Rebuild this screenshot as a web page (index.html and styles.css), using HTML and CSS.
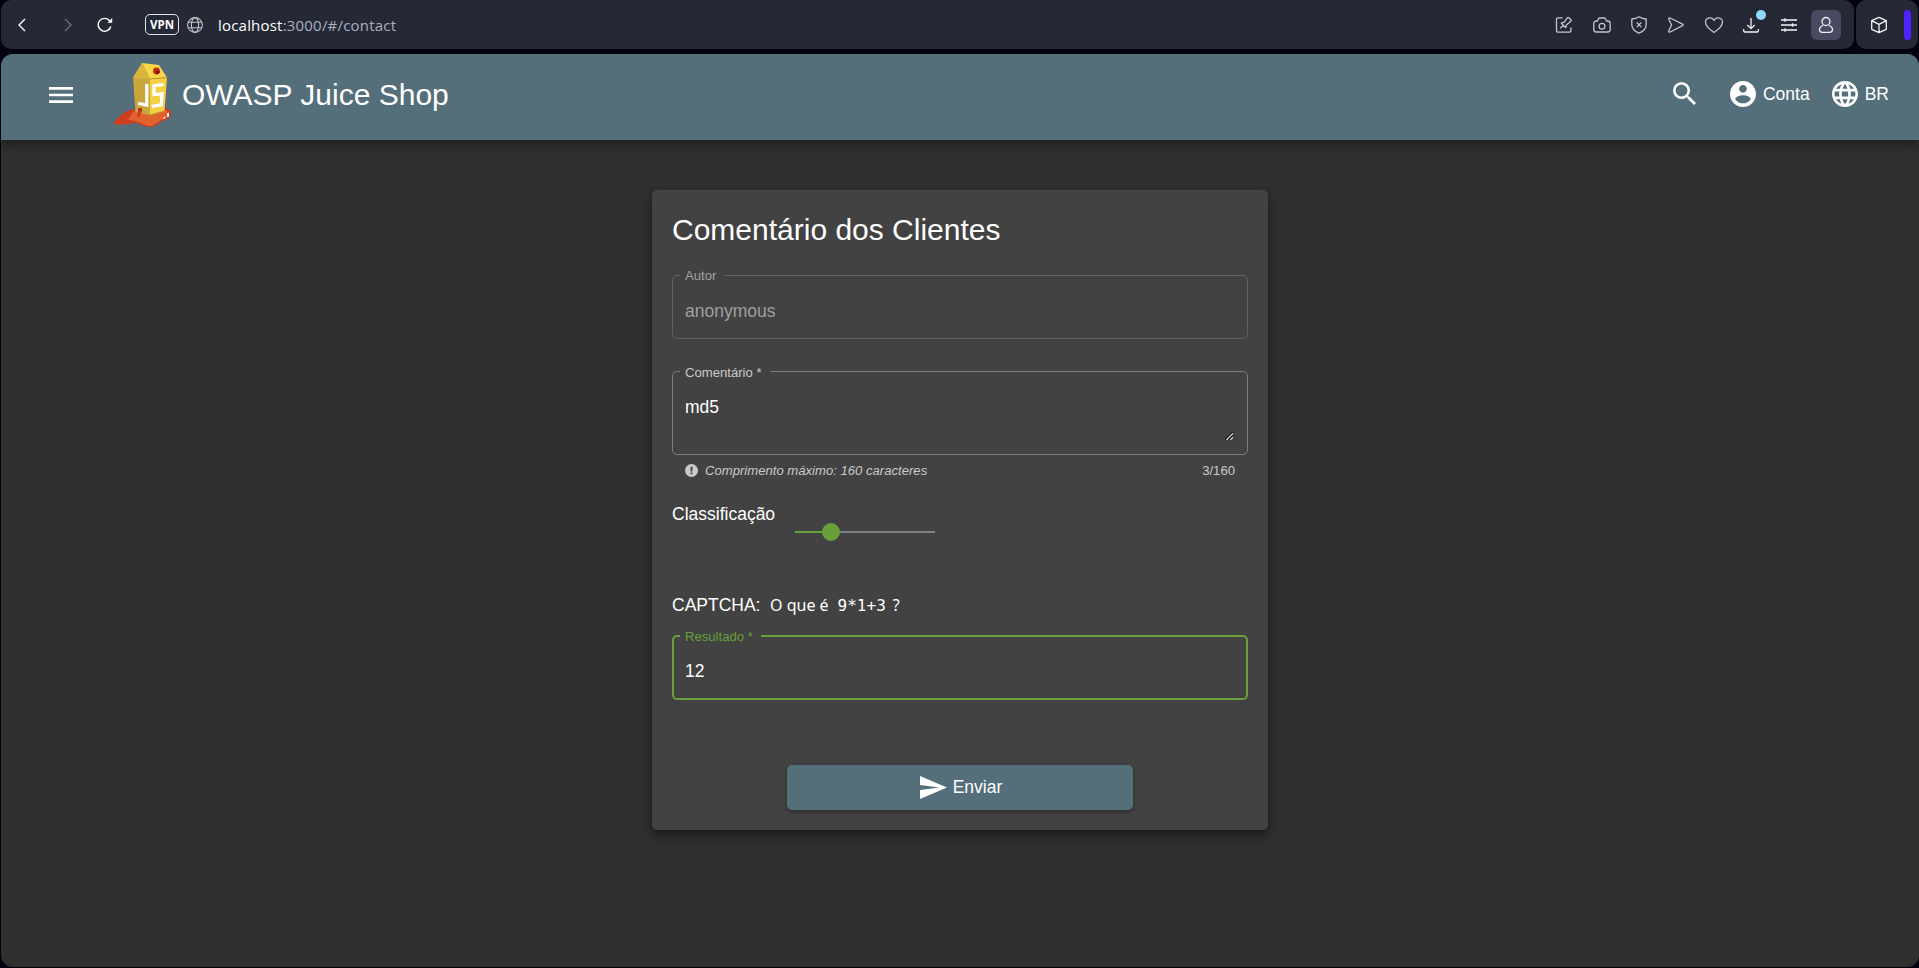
FILE: index.html
```html
<!DOCTYPE html>
<html lang="pt-BR">
<head>
<meta charset="utf-8">
<title>OWASP Juice Shop</title>
<link rel="stylesheet" href="styles.css">
</head>
<body>
<div class="browser">
  <div class="chrome">
    <div class="toolbar">
      <div class="nav-buttons">
        <svg class="back" width="8" height="14" viewBox="0 0 8 14"><path d="M7 1 1 7l6 6"/></svg>
        <svg class="forward" width="8" height="14" viewBox="0 0 8 14"><path d="M1 1l6 6-6 6"/></svg>
        <svg class="reload" width="16" height="16" viewBox="0 0 16 16"><path d="M13.800 9.500A6.400 6.400 0 1 1 12.400 3.500L14 5"/><path class="solid" d="M15.200 1v4.800H10.400z"/></svg>
      </div>
      <div class="vpn">VPN</div>
      <svg class="site" width="16" height="16" viewBox="0 0 16 16"><circle cx="8" cy="8" r="7.4"/><ellipse cx="8" cy="8" rx="3.6" ry="7.4"/><path d="M1.400 5.200h13.200M1.400 10.800h13.200"/></svg>
      <div class="url"><span class="host">localhost</span>:3000/#/contact</div>
      <div class="tools">
        <svg width="18" height="18" viewBox="0 0 18 18"><path d="M7.500 1.800H3a1.500 1.500 0 0 0-1.500 1.500v11.400A1.500 1.500 0 0 0 3 16.200h11.400a1.500 1.500 0 0 0 1.500-1.500V11.500"/><path d="M5.200 12.300 8.400 9.200M6.300 7.200l4.400 4.400.9-2.900 4.200-3.400c.6-.5.600-1 .1-1.500L13.800 1.700c-.5-.5-1-.5-1.500.1L9.200 6.100z"/></svg>
        <svg width="18" height="18" viewBox="0 0 18 18"><path d="M.8 7.500a2.500 2.500 0 0 1 2.500-2.500h1.200l1-2.200c.3-.6.700-.8 1.300-.8h4.400c.6 0 1 .2 1.300.8l1 2.200h1.200a2.500 2.500 0 0 1 2.500 2.500v6a2.500 2.500 0 0 1-2.500 2.500H3.300a2.500 2.500 0 0 1-2.500-2.500z"/><circle cx="9" cy="10.200" r="2.900"/></svg>
        <svg width="18" height="18" viewBox="0 0 18 18"><path d="M9 .8c2.300 1.500 4.700 2.200 7.200 2.200v5.500c0 4-3 7-7.200 8.700-4.200-1.700-7.200-4.700-7.200-8.700V3C4.300 3 6.700 2.300 9 .8z"/><path d="M6.700 6.500l4.600 4.600M11.300 6.500l-4.600 4.600"/></svg>
        <svg width="18" height="18" viewBox="0 0 18 18"><path d="M3.200 2 15.500 8.200c.8.400.8 1 0 1.500L3.200 16c-1 .5-1.800-.2-1.400-1.200L4.600 9 1.800 3.200C1.400 2.200 2.200 1.500 3.200 2z"/></svg>
        <svg width="18" height="18" viewBox="1 0 18 18"><path d="M10 16.500C4 12.500 1.500 9.500 1.500 6.300c0-5 6.500-6.100 8.500-1.800 2-4.300 8.500-3.200 8.500 1.800 0 3.200-2.500 6.200-8.500 10.200z"/></svg>
        <span class="download">
          <svg class="bright" width="18" height="18" viewBox="0 0 18 18"><path d="M9 2v10.500M5.300 9l3.700 3.600L12.700 9M1.700 13v1.700c0 .8.500 1.300 1.300 1.300h12c.8 0 1.300-.5 1.300-1.300V13"/></svg>
          <span class="dot"></span>
        </span>
        <svg class="bright" width="18" height="18" viewBox="0 0 18 18"><path d="M1 4h16M1 9h16M1 14h16M5 2.200v3.600M12.500 7.200v3.600M5 12.200v3.600"/></svg>
        <span class="profile">
          <svg class="bright" width="18" height="18" viewBox="0 0 18 18"><circle cx="9" cy="5.500" r="4"/><path d="M6 9.500c-2.500 1-3.700 2.700-3.500 4.500.2 1.500 1.300 2.300 3 2.300h7c1.700 0 2.800-.8 3-2.300.2-1.800-1-3.500-3.500-4.500"/></svg>
        </span>
      </div>
    </div>
    <div class="side">
      <svg class="bright" width="18" height="18" viewBox="0 0 18 18"><path d="M9 1.300l7.300 3.400v8.600l-7.300 3.400-7.300-3.400V4.700zM1.700 4.700l7.300 3.600 7.300-3.600M9 8.300v8.400"/></svg>
      <span class="bar"></span>
    </div>
  </div>

  <div class="page">
    <header class="navbar">
      <svg class="menu" width="24" height="16" viewBox="0 0 24 16"><path d="M0 0h24v2.700H0zM0 6.700h24v2.600H0zM0 13.300h24V16H0z"/></svg>
      <svg class="logo" width="60" height="66" viewBox="0 0 60 66">
        <path fill="#cf3d1e" d="M0 61c2-3 6-6 11-10 5-4 12-4 19-4l20-1c5 0 8 2 8 5 0 4-3 6-8 8-4 1-6 6-13 6-6 0-9-3-15-4-7 0-16 4-22 0z"/>
        <path fill="#e0622f" d="M14 58c6-3 3-7 8-9l20 3 11-4c3 2 2 7-2 9-6 1-8 7-14 7-7 0-10-6-23-6z"/>
        <path fill="#fff" d="M54 51.500l2-1v4l-1.600 1zM50.500 55.500l1.800-.8v1.500l-1.800.8z"/>
        <path fill="#c9a73c" d="M29 1 20 15.500l2.500 34.500L37 53V17z"/>
        <path fill="#fad749" d="M29 1l17 2 8 12.500-17 1.500z"/>
        <path fill="#f3cf45" d="M37 17l17-1.500L51.500 49 37 53z"/>
        <path fill="#d9b53e" d="M20 15.500 29 1l8 16z"/>
        <path fill="none" stroke="#b8942f" stroke-width="1" d="M37 17l17-1.500"/>
        <path fill="none" stroke="#b8942f" stroke-width=".8" d="M22.500 50 37 53l14.500-4"/>
        <circle cx="43.500" cy="9" r="3.400" fill="#c32817"/><path fill="#7d160d" d="M43 9h4a3.400 3.400 0 0 1-4 3.300z"/>
        <path fill="none" stroke="#fff" stroke-width="3.200" d="M33.800 22v21l-8.500-1.600M50.500 22.600l-9.500 1v9l8-.8-.7 11-9.500 1.500"/>
        <circle cx="27" cy="48" r="2.200" fill="#b52d18"/><path fill="#cf3d1e" d="M25 49l4 0-2 6h-3z"/>
      </svg>
      <h1 class="brand">OWASP Juice Shop</h1>
      <svg class="search" width="23" height="23" viewBox="3 3 17.500 17.500"><path d="M15.500 14h-.79l-.28-.27A6.471 6.471 0 0 0 16 9.500 6.500 6.500 0 1 0 9.500 16c1.610 0 3.090-.59 4.230-1.570l.27.28v.79l5 4.990L20.490 19l-4.990-5zm-6 0C7.010 14 5 11.990 5 9.500S7.010 5 9.500 5 14 7.010 14 9.500 11.990 14 9.500 14z"/></svg>
      <div class="nav-item account">
        <svg width="26" height="26" viewBox="2 2 20 20"><path d="M12 2C6.480 2 2 6.480 2 12s4.480 10 10 10 10-4.480 10-10S17.520 2 12 2zm0 3c1.660 0 3 1.340 3 3s-1.340 3-3 3-3-1.340-3-3 1.340-3 3-3zm0 14.200c-2.500 0-4.710-1.280-6-3.220.03-1.990 4-3.080 6-3.080 1.990 0 5.970 1.090 6 3.080-1.290 1.940-3.500 3.220-6 3.220z"/></svg>
        <span>Conta</span>
      </div>
      <div class="nav-item">
        <svg width="26" height="26" viewBox="2 2 20 20"><path d="M11.990 2C6.470 2 2 6.480 2 12s4.470 10 9.990 10C17.520 22 22 17.520 22 12S17.520 2 11.990 2zm6.930 6h-2.950a15.650 15.650 0 0 0-1.380-3.560A8.030 8.030 0 0 1 18.920 8zM12 4.040c.83 1.200 1.480 2.530 1.910 3.960h-3.820c.43-1.430 1.080-2.760 1.910-3.960zM4.260 14C4.100 13.360 4 12.690 4 12s.1-1.360.26-2h3.380c-.08.66-.14 1.320-.14 2s.06 1.340.14 2H4.260zm.82 2h2.950c.32 1.250.78 2.450 1.380 3.560A7.987 7.987 0 0 1 5.080 16zm2.950-8H5.080a7.987 7.987 0 0 1 4.330-3.560A15.650 15.650 0 0 0 8.030 8zM12 19.960c-.83-1.200-1.480-2.530-1.910-3.960h3.820c-.43 1.430-1.080 2.760-1.910 3.960zM14.340 14H9.660c-.09-.66-.16-1.320-.16-2s.07-1.350.16-2h4.680c.09.65.16 1.320.16 2s-.07 1.340-.16 2zm.25 5.560c.6-1.110 1.060-2.310 1.380-3.560h2.950a8.030 8.030 0 0 1-4.330 3.560zM16.360 14c.08-.66.14-1.320.14-2s-.06-1.340-.14-2h3.380c.16.640.26 1.310.26 2s-.1 1.360-.26 2h-3.380z"/></svg>
        <span>BR</span>
      </div>
    </header>

    <main class="card">
      <h2 class="title">Comentário dos Clientes</h2>
      <fieldset class="field author"><legend>Autor</legend><div class="value">anonymous</div></fieldset>
      <fieldset class="field comment"><legend>Comentário *</legend>
        <div class="value"><span>md5</span>
          <svg class="grip" width="8" height="8" viewBox="0 0 8 8"><path stroke="#111" d="M0 8 8 0"/><path stroke="#e8e8e8" d="M1.500 8 8 1.500M5 8l3-3"/><path stroke="#111" d="M3.300 8 8 3.300"/></svg>
        </div>
      </fieldset>
      <div class="hints">
        <svg width="13" height="13" viewBox="0 0 13 13"><circle cx="6.500" cy="6.500" r="6.500"/><path d="M5.500 2.800h2v4.700h-2zM5.500 8.500h2v1.800h-2z"/></svg>
        <em>Comprimento máximo: 160 caracteres</em>
        <span class="count">3/160</span>
      </div>
      <div class="rating">
        <span>Classificação</span>
        <div class="slider"><i class="done"></i><i class="thumb"></i><i class="rest"></i></div>
      </div>
      <div class="captcha"><span class="cap">CAPTCHA:</span><span class="ask">O que é</span><code>9*1+3</code><span class="ask">?</span></div>
      <fieldset class="field result"><legend>Resultado *</legend><div class="value">12</div></fieldset>
      <button class="submit" type="button"><svg width="27" height="23" viewBox="2 3 21 18" preserveAspectRatio="none"><path d="M2.010 21 23 12 2.010 3 2 10l15 2-15 2z"/></svg><span>Enviar</span></button>
    </main>
  </div>
</div>
</body>
</html>
```
FILE: styles.css
```css
* { box-sizing: border-box; }
body {
  margin: 0;
  background: #02030f;
  font-family: "Liberation Sans", Arial, sans-serif;
  font-size: 17.5px;
  color: #fff;
}
svg { display: block; flex: none; }
.browser { height: 968px; display: flex; flex-direction: column; gap: 5px; padding: 0 0 1px 1px; overflow: hidden; }

.chrome { display: flex; gap: 2px; height: 49px; padding-right: 1px; }
.toolbar { flex: 1; display: flex; align-items: center; background: #252935; border-radius: 10px; padding-left: 17px; }
.chrome svg { fill: none; stroke: #c3c5cb; stroke-width: 1.3; stroke-linejoin: round; }
.chrome svg.bright { stroke: #f2f3f5; }
.nav-buttons { display: flex; align-items: center; }
.chrome .back { stroke: #fff; stroke-width: 1.4; }
.chrome .forward { stroke: #6b6f7b; stroke-width: 1.4; margin-left: 38px; }
.chrome .reload { stroke: #fff; stroke-width: 1.4; margin-left: 25px; }
.chrome .reload .solid { fill: #fff; stroke: none; }
.vpn {
  width: 34px; height: 21px; margin-left: 32px;
  border: 1px solid #e4e5e8; border-radius: 5px;
  font: 700 11.5px/19px "Open Sans", sans-serif; text-align: center;
}
.chrome .site { margin-left: 8px; stroke-width: 1.1; }
.url { margin-left: 15px; font: 15px/20px "Open Sans", sans-serif; letter-spacing: .2px; color: #a9afc0; white-space: nowrap; }
.host { color: #fff; }
.tools { margin-left: auto; display: flex; align-items: center; padding-right: 13px; gap: 19.4px; }
.download { position: relative; }
.dot { position: absolute; left: 14px; top: -6px; width: 10px; height: 10px; border-radius: 50%; background: #8fd8ff; }
.profile { width: 30px; height: 30px; margin-left: -6px; border-radius: 6px; background: #474a60; display: grid; place-items: center; }
.side { width: 62px; background: #252935; border-radius: 10px; display: flex; align-items: center; padding-left: 14px; }
.bar { width: 7px; height: 30px; margin-left: 16px; border-radius: 4px; background: #4f22ff; }

.page { flex: 1; background: #303030; border-radius: 12px; overflow: hidden; display: flex; flex-direction: column; align-items: center; }
.navbar {
  align-self: stretch; height: 86px; flex: none;
  display: flex; align-items: center; padding: 0 30px 0 48px;
  background: #546e7a;
  box-shadow: 0 4px 6px rgba(0,0,0,.22), 0 8px 12px rgba(0,0,0,.15);
}
.navbar svg { fill: #fff; }
.navbar .menu { margin-top: -5px; }
.navbar .logo { margin: -5px 0 0 40px; }
.brand { margin: -4px auto 0 9px; font-size: 30px; line-height: 36px; font-weight: 400; white-space: nowrap; }
.navbar .search { margin: -7px 34px 0 0; }
.nav-item { display: flex; align-items: center; gap: 7px; margin-top: -6px; }
.account { margin-right: 22px; }

.card {
  width: 616px; height: 640px; margin-top: 50px; padding: 20px;
  display: flex; flex-direction: column;
  background: #424242; border-radius: 5px;
  box-shadow: 0 3px 6px rgba(0,0,0,.3), 0 8px 15px rgba(0,0,0,.25);
}
.title { margin: 0; height: 58px; font-size: 30px; line-height: 40px; font-weight: 400; }
.field { margin: 0; min-width: 0; border: 1px solid #7b7b7b; border-radius: 5px; padding: 0 12px; }
.field legend { height: 14px; margin-left: -5px; padding: 0 8px 0 5px; font-size: 13.125px; line-height: 15px; color: #cacaca; }
.value { line-height: 20px; }
.author { height: 71px; border-color: #616161; }
.author legend, .author .value { color: #a0a0a0; }
.author .value { margin-top: 19px; }
.comment { height: 91px; margin-top: 25px; }
.comment legend { line-height: 17px; }
.comment .value { display: flex; justify-content: space-between; height: 43px; margin-top: 19px; }
.grip { align-self: flex-end; margin-right: 2px; fill: none; stroke-width: 1.300; }
.hints { display: flex; align-items: center; height: 15px; margin-top: 8px; padding: 0 13px; font-size: 13.125px; color: #cacaca; }
.hints svg { fill: #cacaca; margin-right: 7px; }
.hints svg path { fill: #424242; }
.count { margin-left: auto; }
.rating { display: flex; margin-top: 25px; height: 50px; line-height: 22px; }
.slider { display: flex; align-items: center; width: 140px; height: 20px; margin: 19px 0 0 20px; }
.slider .done { width: 27px; height: 2px; background: #689f38; }
.slider .thumb { width: 18px; height: 18px; border-radius: 50%; background: #689f38; }
.slider .rest { flex: 1; height: 2px; background: #818181; }
.captcha { display: flex; align-items: baseline; margin-top: 41px; height: 22px; line-height: 22px; white-space: pre; }
.cap { width: 98px; }
.ask { font-family: "Noto Sans", sans-serif; font-size: 16px; }
.captcha code { font-family: "DejaVu Sans Mono", monospace; font-size: 16px; margin: 0 7px 0 9px; }
.result { height: 71px; margin-top: 13px; border: 2px solid #689f38; padding: 0 11px; }
.result legend { color: #689f38; }
.result .value { margin-top: 18px; }
.submit {
  width: 346px; height: 45px; margin: auto auto 0;
  display: flex; align-items: center; justify-content: center; gap: 6px;
  border: 0; border-radius: 5px; background: #546e7a; color: #fff; padding: 0 0 0 2px;
  font: 17.5px "Liberation Sans", Arial, sans-serif;
  box-shadow: 0 2px 4px rgba(0,0,0,.35);
}
.submit svg { fill: #fff; }
```
